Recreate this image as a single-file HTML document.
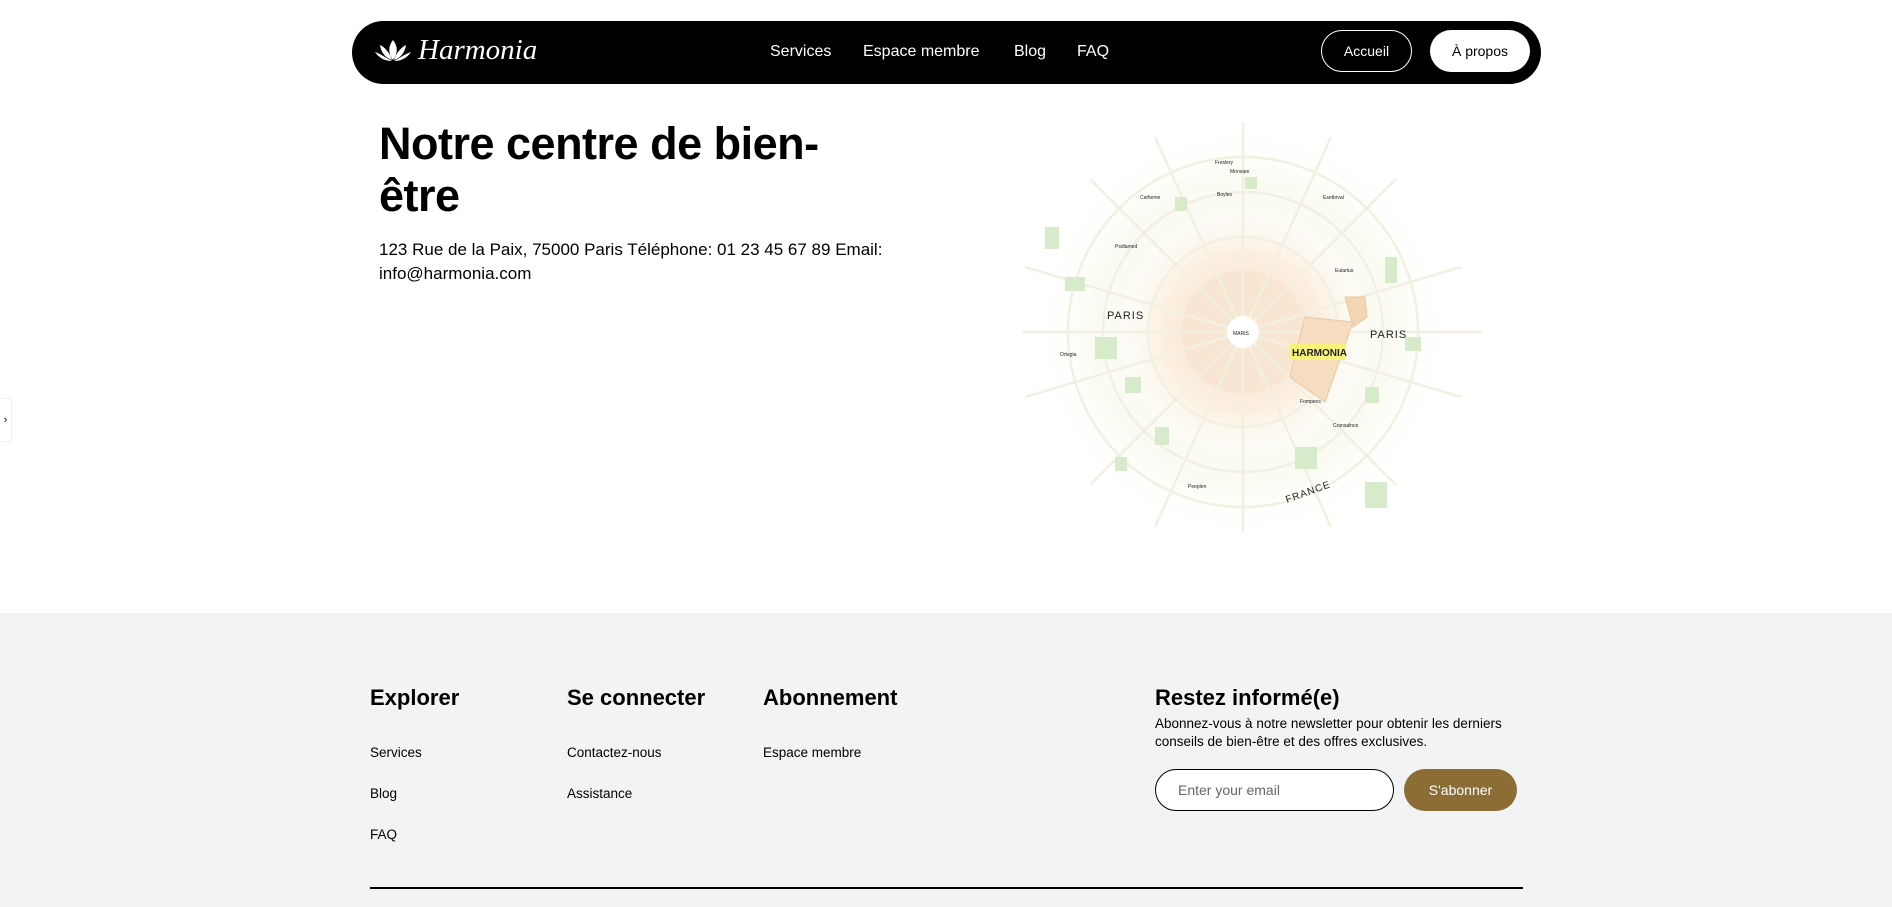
<!DOCTYPE html>
<html><head><meta charset="utf-8"><style>
*{margin:0;padding:0;box-sizing:border-box}
body{width:1892px;height:907px;overflow:hidden;background:#fff;font-family:"Liberation Sans",sans-serif;color:#000;position:relative}
.nav{position:absolute;left:352px;top:21px;width:1189px;height:63px;background:#000;border-radius:32px}
.logo{position:absolute;left:22px;top:13px;display:flex;align-items:center;color:#fff;font-family:"Liberation Serif",serif;font-style:italic;font-size:29px}
.links a{position:absolute;top:22px;color:#fff;font-size:16px;text-decoration:none}
.btn{position:absolute;top:9px;height:42px;border-radius:21px;font-size:14px;display:flex;align-items:center;justify-content:center}
h1{position:absolute;left:379px;top:118px;font-size:45px;line-height:52px;font-weight:700;letter-spacing:-0.5px}
.addr{position:absolute;left:379px;top:238px;font-size:17px;line-height:24px;width:520px}
.foot{position:absolute;left:0;top:613px;width:1892px;height:294px;background:#f2f3f5}
</style></head><body>
<div class="nav">
 <div class="logo"><svg width="38" height="26" viewBox="0 0 38 26"><g fill="#fff"><path d="M19 2C14 8 14 16 19 22C24 16 24 8 19 2Z"/><path d="M6 7C7 14 11 20 18 22C16 16 12 10 6 7Z"/><path d="M32 7C31 14 27 20 20 22C22 16 26 10 32 7Z"/><path d="M1 14C5 20 11 23 18 23C12 20 7 16 1 14Z"/><path d="M37 14C33 20 27 23 20 23C26 20 31 16 37 14Z"/></g></svg><span style="margin-left:6px">Harmonia</span></div>
 <div class="links"><a style="left:418px">Services</a><a style="left:511px">Espace membre</a><a style="left:662px">Blog</a><a style="left:725px">FAQ</a></div>
 <div class="btn" style="left:969px;width:91px;border:1.5px solid #fff;color:#fff">Accueil</div>
 <div class="btn" style="left:1078px;width:100px;background:#fff;color:#000">À propos</div>
</div>
<div style="position:absolute;left:0;top:398px;width:12px;height:44px;border:1px solid #eee;border-left:none;background:#fff;font-size:11px;line-height:42px;text-align:center">›</div>
<h1>Notre centre de bien-<br>être</h1>
<div class="addr">123 Rue de la Paix, 75000 Paris Téléphone: 01 23 45 67 89 Email: info@harmonia.com</div>
<svg style="position:absolute;left:1005px;top:117px" width="497" height="416" viewBox="0 0 497 416">
 <defs><radialGradient id="g" cx="50%" cy="50%" r="50%"><stop offset="0" stop-color="#f8e2cc"/><stop offset="0.6" stop-color="#fbeede"/><stop offset="1" stop-color="#fff" stop-opacity="0"/></radialGradient>
 <radialGradient id="b" cx="50%" cy="50%" r="50%"><stop offset="0.7" stop-color="#fbfbf3"/><stop offset="1" stop-color="#fff" stop-opacity="0"/></radialGradient></defs>
 <circle cx="238" cy="215" r="215" fill="url(#b)"/>
 <circle cx="238" cy="215" r="130" fill="url(#g)"/>
 <circle cx="238" cy="215" r="62" fill="#f9e6d2"/>
 <g fill="none" stroke="#f1f0e2" stroke-width="2.5">
  <circle cx="238" cy="215" r="95"/><circle cx="238" cy="215" r="140"/><circle cx="238" cy="215" r="175"/>
  <path d="M238 5V415M18 215H478M85 62L391 368M391 62L85 368M150 20L326 410M326 20L150 410M20 150L456 280M20 280L456 150"/>
 </g>
 <g fill="#d7ebcb">
  <rect x="40" y="110" width="14" height="22"/><rect x="60" y="160" width="20" height="14"/><rect x="90" y="220" width="22" height="22"/><rect x="120" y="260" width="16" height="16"/><rect x="150" y="310" width="14" height="18"/><rect x="290" y="330" width="22" height="22"/><rect x="380" y="140" width="12" height="26"/><rect x="400" y="220" width="16" height="14"/><rect x="360" y="270" width="14" height="16"/><rect x="240" y="60" width="12" height="12"/><rect x="360" y="365" width="22" height="26"/><rect x="110" y="340" width="12" height="14"/><rect x="170" y="80" width="12" height="14"/>
 </g>
 <path d="M340 180L360 180L362 200L348 210L345 198Z" fill="#f3d6b4" stroke="#e8c79f"/>
 <path d="M300 200L348 205L320 285L285 260Z" fill="#f6dcc0" stroke="#e8c79f"/>
 <circle cx="238" cy="215" r="16" fill="#fff"/>
 <rect x="285" y="227" width="56" height="16" fill="#f9f27a"/>
 <g font-family="Liberation Sans,sans-serif" fill="#222" font-size="5">
  <text x="228" y="218">MARIS</text>
  <text x="102" y="202" font-size="11" letter-spacing="1">PARIS</text>
  <text x="365" y="221" font-size="11" letter-spacing="1">PARIS</text>
  <text x="287" y="239" font-size="10" font-weight="700">HARMONIA</text>
  <text x="282" y="386" font-size="10" letter-spacing="1" transform="rotate(-20 282 386)">FRANCE</text>
  <text x="210" y="47">Freslery</text><text x="225" y="56">Monsare</text>
  <text x="135" y="82">Catheme</text><text x="212" y="79">Boyles</text><text x="318" y="82">Esetbrval</text>
  <text x="110" y="131">Psdlamed</text><text x="330" y="155">Eulartus</text>
  <text x="55" y="239">Ortegia</text><text x="328" y="310">Cransalnce</text>
  <text x="183" y="371">Peeplen</text><text x="295" y="286">Fompens</text>
 </g>
</svg>
<div class="foot"></div>
<h3 style="position:absolute;left:370px;top:685px;font-size:22px">Explorer</h3>
<h3 style="position:absolute;left:567px;top:685px;font-size:22px">Se connecter</h3>
<h3 style="position:absolute;left:763px;top:685px;font-size:22px">Abonnement</h3>
<h3 style="position:absolute;left:1155px;top:685px;font-size:22px">Restez informé(e)</h3>
<div style="position:absolute;left:370px;top:745px;font-size:13.5px">Services</div>
<div style="position:absolute;left:370px;top:786px;font-size:13.5px">Blog</div>
<div style="position:absolute;left:370px;top:827px;font-size:13.5px">FAQ</div>
<div style="position:absolute;left:567px;top:745px;font-size:13.5px">Contactez-nous</div>
<div style="position:absolute;left:567px;top:786px;font-size:13.5px">Assistance</div>
<div style="position:absolute;left:763px;top:745px;font-size:13.5px">Espace membre</div>
<div style="position:absolute;left:1155px;top:715px;font-size:13.5px;line-height:18px;width:380px">Abonnez-vous à notre newsletter pour obtenir les derniers conseils de bien-être et des offres exclusives.</div>
<div style="position:absolute;left:1155px;top:769px;width:239px;height:42px;border:1.5px solid #000;border-radius:21px;background:#fff;font-size:14px;color:#666;padding:12px 0 0 22px">Enter your email</div>
<div style="position:absolute;left:1404px;top:769px;width:113px;height:42px;border-radius:21px;background:#8c6d35;color:#fff;font-size:14px;display:flex;align-items:center;justify-content:center">S'abonner</div>
<div style="position:absolute;left:370px;top:887px;width:1153px;height:1.5px;background:#000"></div>
</body></html>
